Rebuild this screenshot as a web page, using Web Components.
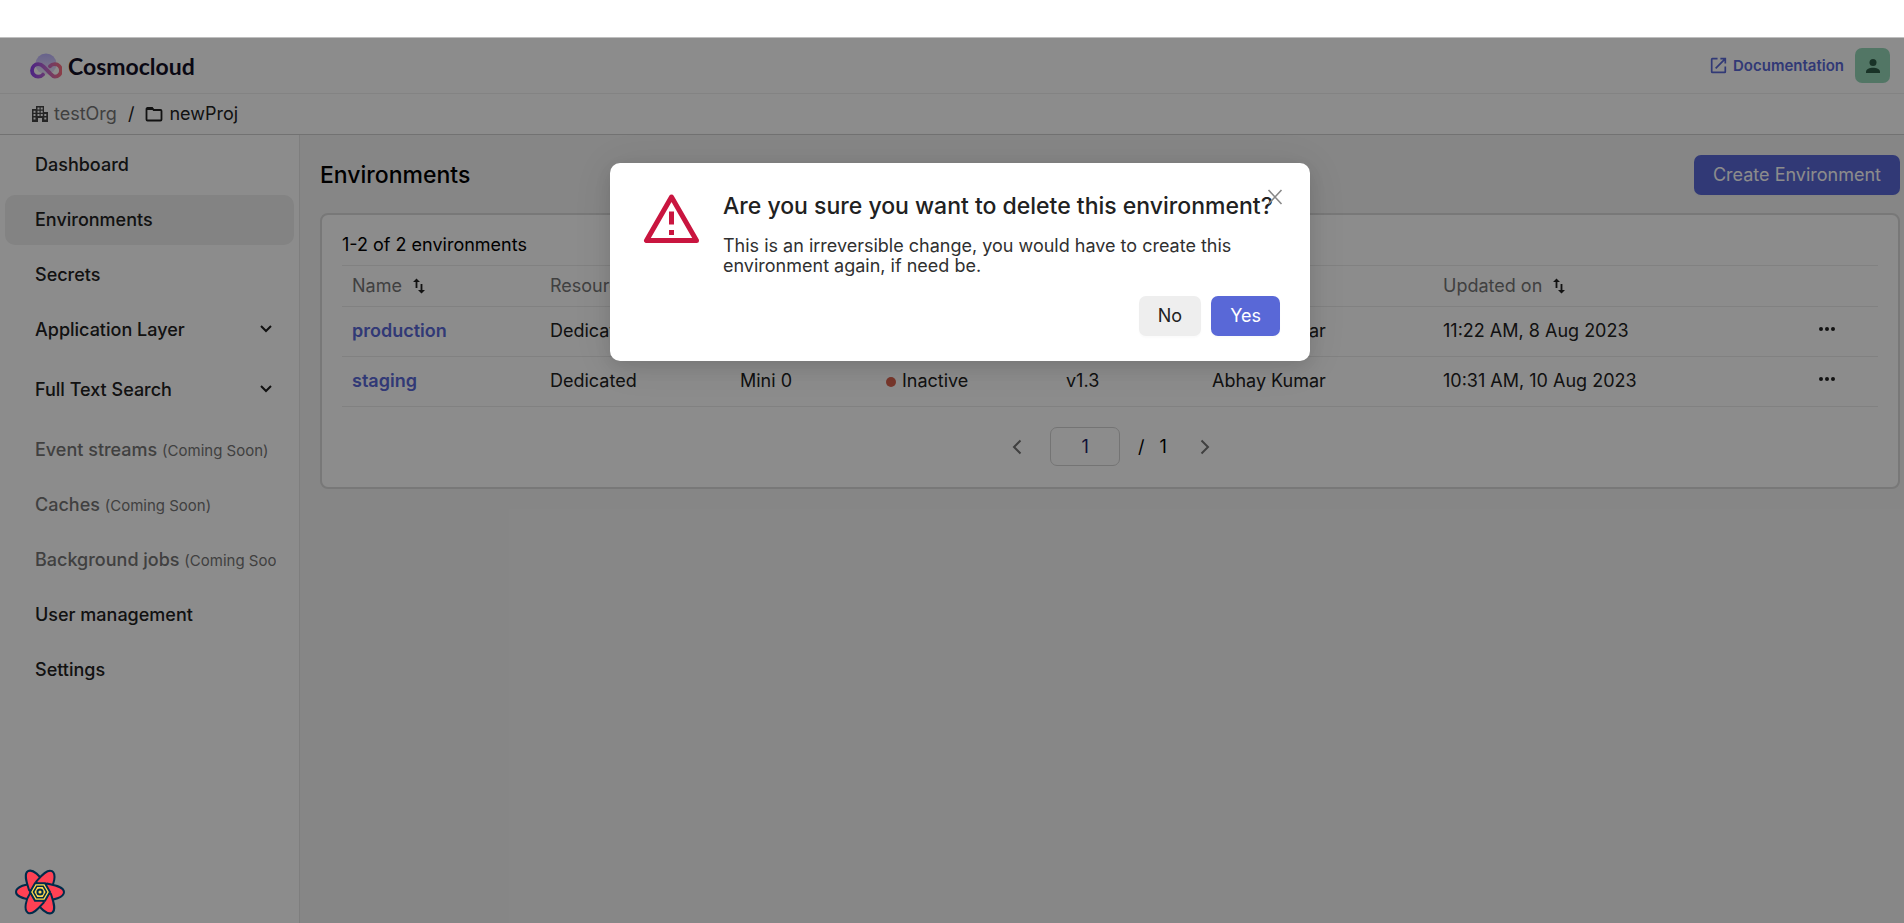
<!DOCTYPE html>
<html lang="en">
<head>
<meta charset="utf-8">
<title>Cosmocloud – Environments</title>
<style>
  html, body { margin: 0; }
  body { font-family: Inter, "Liberation Sans", sans-serif; font-size: 18px; line-height: 22px; color: #212121; background: #fff; }
</style>
</head>
<body>
<cosmo-app></cosmo-app>
<script>
const define = (name, html, setup) => {
  const template = document.createElement('template');
  template.innerHTML = html;
  customElements.define(name, class extends HTMLElement {
    constructor() {
      super();
      this.attachShadow({ mode: 'open' }).append(template.content.cloneNode(true));
    }
    connectedCallback() { if (setup) setup(this, this.shadowRoot); }
  });
};

define('cosmo-logo', `
<style>
  :host { display: flex; }
  a { display: flex; align-items: center; gap: 6px; color: #130f26; text-decoration: none; font: 700 23px/28px Lato, sans-serif; }
</style>
<a href="#home">
  <svg width="32" height="26" viewBox="0 0 32 26" fill="none" aria-hidden="true">
    <defs>
      <linearGradient id="loop" x1="0" x2="32" y1="0" y2="0" gradientUnits="userSpaceOnUse">
        <stop stop-color="#8a3ff0"/><stop offset=".5" stop-color="#c06ad0"/><stop offset="1" stop-color="#ff6f7f"/>
      </linearGradient>
      <linearGradient id="cloud" x1="0" x2="0" y1="0" y2="22" gradientUnits="userSpaceOnUse">
        <stop stop-color="#bcb2ff"/><stop offset="1" stop-color="#f0e8fa"/>
      </linearGradient>
    </defs>
    <circle cx="16" cy="11" r="10.500" fill="url(#cloud)"/>
    <path d="M13 21.600c-1 1.200-2.800 2-4.800 2a6.200 6.200 0 1 1 0-12.400c2.600 0 4 1 5.400 2.400l6.600 6.800c1.400 1.600 2.600 3.200 4.600 3.200a6.200 6.200 0 0 0 0-12.400c-2.200 0-3.800.800-4.800 2" stroke="url(#loop)" stroke-width="3.800" stroke-linecap="round"/>
  </svg>
  <span>Cosmocloud</span>
</a>`);

define('cosmo-header', `
<style>
  :host { display: flex; align-items: center; justify-content: space-between; height: 55px; padding: 0 14px 0 30px; border-bottom: 1px solid #eee; background: #fff; }
  nav { display: flex; align-items: center; gap: 11px; }
  a { display: flex; align-items: center; gap: 6px; color: #5968d7; font-size: 15px; font-weight: 600; line-height: 20px; text-decoration: none; }
  button { display: grid; place-items: center; width: 35px; height: 35px; padding: 0; border: 0; border-radius: 7px; background: #95d8b9; color: #2f5e47; }
</style>
<cosmo-logo></cosmo-logo>
<nav aria-label="Account">
  <a href="#docs">
    <svg width="17" height="17" viewBox="0 0 18 18" fill="none" stroke="currentColor" stroke-width="1.800" aria-hidden="true">
      <path d="M8 1.800H2.500a.7.7 0 0 0-.7.7v13a.7.7 0 0 0 .7.7h13a.7.7 0 0 0 .7-.7V10M11 1.800h5.200V7M16 2 6 12"/>
    </svg>
    <span>Documentation</span>
  </a>
  <button type="button" aria-label="Profile">
    <svg width="16" height="16" viewBox="0 0 16 16" fill="currentColor" aria-hidden="true"><circle cx="8" cy="4.500" r="3.500"/><path d="M1 15v-1.200C1 11 4.700 9.700 8 9.700s7 1.300 7 4.100V15z"/></svg>
  </button>
</nav>`);

define('cosmo-breadcrumbs', `
<style>
  :host { display: block; border-bottom: 1px solid #cfcfcf; background: #fff; }
  nav { display: flex; align-items: center; gap: 11px; height: 40px; padding: 0 32px; }
  a { display: flex; align-items: center; gap: 6px; color: #212121; text-decoration: none; }
  a.org { color: #757575; }
  svg { color: #444; }
</style>
<nav aria-label="Breadcrumb">
  <a class="org" href="#org">
    <svg width="16" height="16" viewBox="0 0 16 16" aria-hidden="true">
      <path fill="currentColor" fill-rule="evenodd" d="M4 0h8v6h4v10h-6v-4H6v4H0V3h4zM5.500 1.500v2h2v-2zM8.700 1.500v2h2v-2zM1.500 4.700v2h2v-2zM5.500 4.700v2h2v-2zM8.700 4.700v2h2v-2zM1.500 8v2h2V8zM5.500 8v2h2V8zM8.700 8v2h2V8zM12.300 8v2h2V8zM1.500 11.500v2h2v-2zM12.300 11.500v2h2v-2z"/>
    </svg>
    <span>testOrg</span>
  </a>
  <span>/</span>
  <a href="#project">
    <svg width="18" height="16" viewBox="0 0 18 16" aria-hidden="true"><path d="M2.500 2h4.600l1.600 2h6.800a1 1 0 0 1 1 1v8.500a1 1 0 0 1-1 1h-13a1 1 0 0 1-1-1V3a1 1 0 0 1 1-1z" fill="none" stroke="#212121" stroke-width="1.800"/><path d="M2 1.500h5.400l2 2.500H1.500z" fill="#212121"/></svg>
    <span>newProj</span>
  </a>
</nav>`);

define('nav-item', `
<style>
  :host { display: block; margin-bottom: 5px; }
  :host([expandable]) { margin-bottom: 10px; }
  a { display: flex; align-items: center; gap: 5px; height: 50px; padding: 0 18px 0 30px; border-radius: 10px; color: #212121; font-weight: 500; text-decoration: none; }
  .label { flex: 1; min-width: 0; overflow: hidden; white-space: nowrap; }
  :host([active]) a { background: #eee; }
  :host([soon]) a { color: #757575; }
  svg { display: none; flex: none; margin-right: 3px; }
  :host([expandable]) svg { display: block; }
  ::slotted(small) { font-size: 15px; font-weight: 400; }
</style>
<a href="#section"><span class="label"><slot></slot></span>
<svg width="14" height="10" viewBox="0 0 14 10" fill="none" stroke="#212121" stroke-width="2" aria-hidden="true"><path d="M2 1l5 5 5-5"/></svg></a>`);

define('cosmo-sidebar', `
<style>
  :host { display: block; flex: none; width: 289px; padding: 5px; border-right: 1px solid #e6e6e6; background: #fff; }
</style>
<nav aria-label="Sections">
  <nav-item>Dashboard</nav-item>
  <nav-item active>Environments</nav-item>
  <nav-item>Secrets</nav-item>
  <nav-item expandable>Application Layer</nav-item>
  <nav-item expandable>Full Text Search</nav-item>
  <nav-item soon>Event streams <small>(Coming Soon)</small></nav-item>
  <nav-item soon>Caches <small>(Coming Soon)</small></nav-item>
  <nav-item soon>Background jobs <small>(Coming Soon)</small></nav-item>
  <nav-item>User management</nav-item>
  <nav-item>Settings</nav-item>
</nav>`);

define('cosmo-button', `
<style>
  :host { display: inline-block; }
  button { display: block; height: 40px; padding: 0 19px; border: 0; border-radius: 7px; background: #eee; color: #212121; font: inherit; box-shadow: 0 2px 2px rgba(0, 0, 0, .02); }
  :host([primary]) button { background: #5968d7; color: #fff; }
</style>
<button type="button"><slot></slot></button>`);

define('env-pager', `
<style>
  :host { display: flex; align-items: center; justify-content: center; gap: 18px; }
  button { display: grid; place-items: center; width: 20px; height: 20px; padding: 0; border: 0; background: none; color: #757575; }
  input { box-sizing: border-box; width: 70px; height: 39px; margin: 0 0 0 5px; padding: 0; border: 1px solid #d4d4d4; border-radius: 7px; background: #fff; color: #212167; font: inherit; text-align: center; }
  .total { display: flex; gap: 15px; }
  .previous { margin-left: 2px; }
  .next { margin-left: 10px; }
</style>
<button class="previous" type="button" aria-label="Previous page"><svg width="10" height="16" viewBox="0 0 10 16" fill="none" stroke="currentColor" stroke-width="2"><path d="M8.500 1.500 2 8l6.500 6.500"/></svg></button>
<input type="text" value="1" aria-label="Page">
<div class="total"><span>/</span><span>1</span></div>
<button class="next" type="button" aria-label="Next page"><svg width="10" height="16" viewBox="0 0 10 16" fill="none" stroke="currentColor" stroke-width="2"><path d="M1.500 1.500 8 8l-6.500 6.500"/></svg></button>`);

define('sort-icon', `
<style>:host { display: inline-block; margin-left: 6px; vertical-align: -2px; } svg { display: block; }</style>
<svg width="14" height="16" viewBox="0 0 14 16" aria-hidden="true"><path d="M3.500 10V2M8.500 6v8" stroke="#212121" stroke-width="1.800"/><path d="M3.500.4 7 4H0zM8.500 15.600 5 12h7z" fill="#212121"/></svg>`);

define('env-table', `
<style>
  :host { display: block; }
  table { width: 100%; table-layout: fixed; border-collapse: collapse; color: #212121; }
  th, td { height: 47px; padding: 0 10px 2px; border-bottom: 1px solid #ececec; text-align: left; font-weight: 400; white-space: nowrap; }
  th { height: 40px; padding: 0 10px; border-top: 1px solid #ececec; color: #757575; line-height: 18px; }
  th button { padding: 0; border: 0; background: none; color: inherit; font: inherit; }
  td a { color: #5968d7; font-weight: 600; text-decoration: none; }
  .dot { display: inline-block; width: 10px; height: 10px; margin-right: 6px; border-radius: 50%; background: #d9634f; }
  .dot.on { background: #4caf50; }
  .more { display: block; padding: 0; border: 0; background: none; }
  .more svg { display: block; fill: #212121; }
</style>
<table>
  <colgroup><col style="width:198px"><col style="width:190px"><col style="width:146px"><col style="width:180px"><col style="width:146px"><col style="width:231px"><col style="width:376px"><col style="width:69px"></colgroup>
  <thead><tr>
    <th><button type="button">Name <sort-icon></sort-icon></button></th>
    <th>Resource type</th><th>Size</th><th>Status</th><th>Version</th><th>Created by</th>
    <th><button type="button">Updated on <sort-icon></sort-icon></button></th><th></th>
  </tr></thead>
  <tbody></tbody>
</table>`, (host, root) => {
  const rows = [
    ['production', 'Dedicated', 'Mini 0', 'Active', 'v1.3', 'Abhay Kumar', '11:22 AM, 8 Aug 2023'],
    ['staging', 'Dedicated', 'Mini 0', 'Inactive', 'v1.3', 'Abhay Kumar', '10:31 AM, 10 Aug 2023'],
  ];
  root.querySelector('tbody').innerHTML = rows.map(([name, type, size, status, version, author, updated]) => `<tr>
    <td><a href="#${name}">${name}</a></td><td>${type}</td><td>${size}</td>
    <td><span class="dot ${status === 'Active' ? 'on' : ''}"></span>${status}</td>
    <td>${version}</td><td>${author}</td><td>${updated}</td>
    <td><button class="more" type="button" aria-label="Actions for ${name}"><svg width="16" height="8" viewBox="0 0 16 8"><circle cx="2" cy="2" r="2"/><circle cx="8" cy="2" r="2"/><circle cx="14" cy="2" r="2"/></svg></button></td></tr>`).join('');
});

define('env-page', `
<style>
  :host { display: block; flex: 1; min-width: 0; padding: 20px 4px 20px 20px; background: #f5f5f5; }
  header { display: flex; align-items: center; justify-content: space-between; }
  h1 { margin: 0; color: #000; font-size: 23px; line-height: 28px; font-weight: 500; }
  section { margin-top: 18px; padding: 19px 20px 20px; border: 2px solid #dadada; border-radius: 8px; background: #fff; color: #000; }
  p { margin: 0; padding-bottom: 9px; }
  env-pager { margin-top: 20px; padding-bottom: 1px; }
</style>
<header><h1>Environments</h1><cosmo-button primary>Create Environment</cosmo-button></header>
<section>
  <p>1-2 of 2 environments</p>
  <env-table></env-table>
  <env-pager></env-pager>
</section>`);

define('confirm-dialog', `
<style>
  :host { position: absolute; inset: 0; z-index: 10; display: flex; justify-content: center; align-items: flex-start; padding: 125px 0 0 16px; background: rgba(0, 0, 0, .45); }
  section { position: relative; display: flex; box-sizing: border-box; width: 700px; padding: 30px 30px 25px; border-radius: 10px; background: #fff; color: #212121; box-shadow: 0 6px 16px rgba(0, 0, 0, .1), 0 3px 40px rgba(0, 0, 0, .08); }
  .warning { flex: none; width: 57px; height: 52px; margin: 0 23px 0 3px; }
  .body { flex: 1; }
  h2 { margin: 0 0 17px; font-size: 23px; line-height: 26px; font-weight: 500; white-space: nowrap; }
  p { margin: 0 0 20px; line-height: 20px; color: #303030; }
  footer { display: flex; justify-content: flex-end; gap: 10px; }
  .close { position: absolute; top: 26px; right: 27px; width: 16px; height: 16px; padding: 0; border: 0; background: none; }
  .close svg { display: block; }
</style>
<section role="dialog" aria-modal="true" aria-labelledby="title">
  <svg class="warning" viewBox="0 0 57 52" fill="none" stroke="#c9153f" aria-hidden="true">
    <path d="M28.500 4 3.500 47.500h50z" stroke-width="5" stroke-linejoin="round"/>
    <path d="M28.500 18.500v13M28.500 37v5" stroke-width="5"/>
  </svg>
  <div class="body">
    <h2 id="title">Are you sure you want to delete this environment?</h2>
    <p>This is an irreversible change, you would have to create this environment again, if need be.</p>
    <footer><cosmo-button>No</cosmo-button><cosmo-button primary>Yes</cosmo-button></footer>
  </div>
  <button class="close" type="button" aria-label="Close"><svg width="16" height="16" viewBox="0 0 16 16" fill="none" stroke="#888" stroke-width="1.600"><path d="M1.500 1 14.500 15M14.500 1 1.500 15"/></svg></button>
</section>`);

define('query-devtools', `
<style>
  :host { position: fixed; left: 14px; bottom: 6px; z-index: 20; }
  button { display: block; padding: 0; border: 0; background: none; }
  svg { display: block; }
</style>
<button type="button" aria-label="Open query devtools">
  <svg width="52" height="50" viewBox="-26 -25 52 50" aria-hidden="true">
    <defs><path id="petal" d="M-6-8C-13-8.500-24-5.500-24 0S-14 7-7 8.500L0 0z"/></defs>
    <g fill="#ff4154" stroke="#002c4b" stroke-width="2" stroke-linejoin="round">
      <use href="#petal"/><use href="#petal" transform="rotate(60)"/><use href="#petal" transform="rotate(120)"/>
      <use href="#petal" transform="rotate(180)"/><use href="#petal" transform="rotate(240)"/><use href="#petal" transform="rotate(300)"/>
    </g>
    <path d="M-10 0-5-8.700H5L10 0 5 8.700H-5z" fill="#ffd94c" stroke="#002c4b" stroke-width="2"/>
    <path d="M-6.500 0-3.200-5.700h6.400L6.500 0 3.200 5.700h-6.400z" fill="#ffd94c" stroke="#002c4b" stroke-width="1.500"/>
    <circle r="2.600" fill="#ffd94c" stroke="#002c4b" stroke-width="2"/>
  </svg>
</button>`);

define('cosmo-app', `
<style>
  :host { display: flex; flex-direction: column; min-height: 100vh; }
  .strip { height: 37px; border-bottom: 1px solid #bfbfbf; background: #fff; }
  .shell { position: relative; flex: 1; display: flex; flex-direction: column; }
  .columns { flex: 1; display: flex; }
</style>
<div class="strip"></div>
<div class="shell">
  <cosmo-header></cosmo-header>
  <cosmo-breadcrumbs></cosmo-breadcrumbs>
  <div class="columns"><cosmo-sidebar></cosmo-sidebar><env-page></env-page></div>
  <confirm-dialog></confirm-dialog>
</div>
<query-devtools></query-devtools>`);
</script>
</body>
</html>
